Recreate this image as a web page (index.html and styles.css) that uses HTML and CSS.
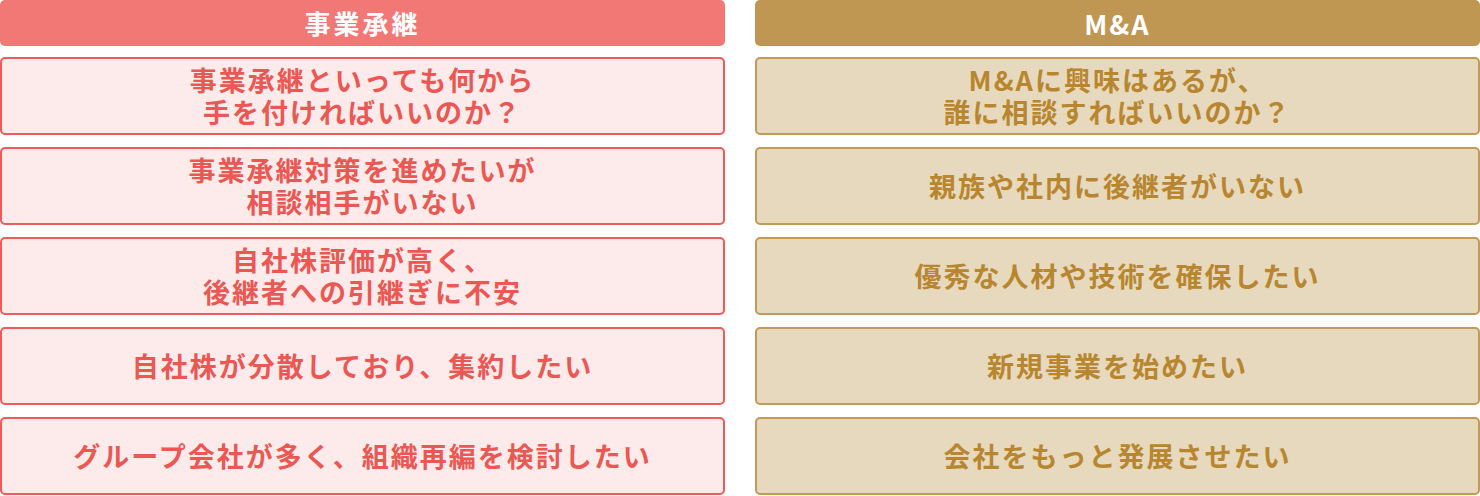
FILE: index.html
```html
<!DOCTYPE html>
<html lang="ja">
<head>
<meta charset="utf-8">
<link rel="stylesheet" href="styles.css">
</head>
<body>
<div class="board">
  <section class="col col-succession">
    <div class="head">事業承継</div>
    <div class="item">事業承継といっても何から<br>手を付ければいいのか？</div>
    <div class="item">事業承継対策を進めたいが<br>相談相手がいない</div>
    <div class="item">自社株評価が高く、<br>後継者への引継ぎに不安</div>
    <div class="item">自社株が分散しており、集約したい</div>
    <div class="item">グループ会社が多く、組織再編を検討したい</div>
  </section>
  <section class="col col-ma">
    <div class="head head-latin">M&amp;A</div>
    <div class="item">M&amp;Aに興味はあるが、<br>誰に相談すればいいのか？</div>
    <div class="item">親族や社内に後継者がいない</div>
    <div class="item">優秀な人材や技術を確保したい</div>
    <div class="item">新規事業を始めたい</div>
    <div class="item">会社をもっと発展させたい</div>
  </section>
</div>
</body>
</html>
```
FILE: styles.css
```css
* { box-sizing: border-box; }
html, body { margin: 0; padding: 0; background: #fff; }
body {
  font-family: "Noto Sans CJK JP", "Noto Sans", sans-serif;
  font-weight: 700;
}
.board {
  display: grid;
  grid-template-columns: 725px 725px;
  column-gap: 30px;
  width: 1480px;
}
.col {
  display: flex;
  flex-direction: column;
  gap: 12px;
}
.head {
  height: 46px;
  margin-bottom: -1px;
  border-radius: 5px;
  color: #fff;
  font-size: 26px;
  letter-spacing: 3px;
  display: flex;
  align-items: center;
  justify-content: center;
  line-height: 1;
}
.head-latin {
  letter-spacing: 2px;
  font-size: 27px;
}
.item {
  height: 78px;
  border: 2px solid;
  border-radius: 5px;
  display: flex;
  align-items: center;
  justify-content: center;
  text-align: center;
  font-size: 27px;
  letter-spacing: 2px;
  line-height: 32px;
}
.col-succession .head { background: #f27876; }
.col-succession .item {
  background: #fdebeb;
  border-color: #ee5b58;
  color: #eb5853;
}
.col-ma .head { background: #bf9752; }
.col-ma .item {
  background: #e6d9bd;
  border-color: #c39b57;
  color: #b8862f;
}
```
